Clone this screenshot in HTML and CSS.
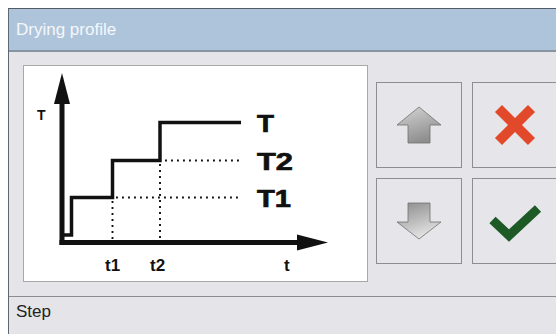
FILE: index.html
```html
<!DOCTYPE html>
<html>
<head>
<meta http-equiv="Content-Type" content="text/html; charset=utf-8"/>
<title>Drying profile</title>
<link rel="stylesheet" href="styles.css">
</head>
<body>
<div class="window">
  <div class="title">Drying profile</div>

  <div class="content">
    <div class="chart">
      <svg width="343" height="215" viewBox="24 66 343 215">
        <!-- axes -->
        <line x1="62" y1="100" x2="62" y2="245" stroke="#111" stroke-width="5"/>
        <polygon points="62,73 54,104 70,104" fill="#111"/>
        <line x1="59.5" y1="242.5" x2="300" y2="242.5" stroke="#111" stroke-width="5"/>
        <polygon points="328,242.5 297,234.5 297,250.5" fill="#111"/>

        <!-- dotted guides -->
        <g stroke="#111" stroke-width="1.9" stroke-dasharray="1.9 4.1" fill="none">
          <line x1="116" y1="197.5" x2="241" y2="197.5"/>
          <line x1="165" y1="160.5" x2="239" y2="160.5"/>
          <line x1="112.5" y1="201" x2="112.5" y2="240"/>
          <line x1="160" y1="164" x2="160" y2="240"/>
        </g>

        <!-- profile -->
        <polyline points="64,235 71.5,235 71.5,197.5 112.5,197.5 112.5,160.5 160,160.5 160,122.5 241,122.5"
                  fill="none" stroke="#111" stroke-width="3.5" stroke-linejoin="miter"/>

        <g class="lbl">
          <text x="37" y="120" font-size="14">T</text>
          <g class="big">
            <text x="257" y="132" font-size="24" textLength="17" lengthAdjust="spacingAndGlyphs">T</text>
            <text x="257" y="169.5" font-size="24" textLength="36" lengthAdjust="spacingAndGlyphs">T2</text>
            <text x="257" y="207" font-size="24" textLength="34" lengthAdjust="spacingAndGlyphs">T1</text>
          </g>
          <text x="105" y="271" font-size="17">t1</text>
          <text x="150" y="271" font-size="17">t2</text>
          <text x="284" y="271" font-size="17">t</text>
        </g>
      </svg>
    </div>

    <div class="buttons">
      <div class="btn">
        <svg width="84" height="84" viewBox="1 1 84 84">
          <defs>
            <linearGradient id="gUp" x1="0" y1="0" x2="0.4" y2="1">
              <stop offset="0" stop-color="#d6d6d6"/>
              <stop offset="1" stop-color="#8f8f8f"/>
            </linearGradient>
          </defs>
          <polygon points="43,25 65,43 54,43 54,61 32,61 32,43 21,43" fill="url(#gUp)" stroke="#6f6f6f" stroke-width="0.8"/>
        </svg>
      </div>
      <div class="btn">
        <svg width="84" height="84" viewBox="1 1 84 84">
          <line x1="26.5" y1="26.5" x2="59.5" y2="59.5" stroke="#e2492a" stroke-width="10"/>
          <line x1="59.5" y1="26.5" x2="26.5" y2="59.5" stroke="#e2492a" stroke-width="10"/>
        </svg>
      </div>
      <div class="btn">
        <svg width="84" height="84" viewBox="1 1 84 84">
          <defs>
            <linearGradient id="gDown" x1="0" y1="0" x2="0.4" y2="1">
              <stop offset="0" stop-color="#8a8a8a"/>
              <stop offset="1" stop-color="#e2e2e2"/>
            </linearGradient>
          </defs>
          <polygon points="32,25 54,25 54,44 65,44 43,61 21,44 32,44" fill="url(#gDown)" stroke="#6f6f6f" stroke-width="0.8"/>
        </svg>
      </div>
      <div class="btn">
        <svg width="84" height="84" viewBox="1 1 84 84">
          <polyline points="20.5,42 37,57.5 66,30.5" fill="none" stroke="#1d5a26" stroke-width="9" stroke-linejoin="miter"/>
        </svg>
      </div>
    </div>
  </div>

  <div class="footer">Step</div>
</div>
</body>
</html>
```

FILE: styles.css
```css
html, body {
  margin: 0;
  padding: 0;
  overflow: hidden;
  background: #fff;
  font-family: "Liberation Sans", Arial, sans-serif;
}

body {
  padding: 8px 0 0 8px;
}

.window {
  width: 560px;
  height: 330px;
  border-left: 1px solid #5e6872;
  border-top: 1px solid #525c67;
  background: #e5e4e8;
}

.title {
  height: 41px;
  line-height: 41px;
  padding-left: 7px;
  font-size: 17px;
  color: #f5f7fa;
  background: #aec4db;
  border-bottom: 2px solid #8794a2;
}

.content {
  height: 231px;
  padding: 13px 0 0 14px;
  display: flex;
  align-items: center;
  gap: 8px;
  border-bottom: 1px solid #8c8c8e;
  margin-bottom: 1px;
}

.chart {
  box-sizing: border-box;
  width: 345px;
  height: 217px;
  align-self: flex-start;
  background: #fff;
  border: 1px solid #a8a8a8;
}

.chart svg {
  display: block;
}

.lbl text {
  font-family: "Liberation Sans", Arial, sans-serif;
  font-weight: bold;
  fill: #111;
}

.lbl .big text {
  stroke: #111;
  stroke-width: 0.7;
}

.buttons {
  display: grid;
  grid-template-columns: 86px 86px;
  grid-auto-rows: 86px;
  gap: 10px;
  margin-top: 17px;
  align-self: flex-start;
}

.btn {
  box-sizing: border-box;
  border: 1px solid #8d8d8d;
  background: #e6e5e9;
}

.btn svg {
  display: block;
}

.footer {
  padding: 4px 0 0 7px;
  font-size: 17px;
  line-height: 20px;
  color: #222;
}
```
